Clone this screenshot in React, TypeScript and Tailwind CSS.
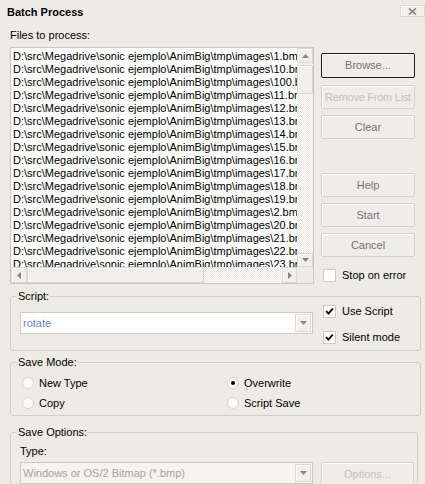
import React from 'react';

const files = ['1', '10', '100', '11', '12', '13', '14', '15', '16', '17', '18', '19', '2', '20', '21', '22', '23', '24'].map(
  (n) => `D:\\src\\Megadrive\\sonic ejemplo\\AnimBig\\tmp\\images\\${n}.bmp`
);

const Tri = ({ dir }: { dir: 'up' | 'down' | 'left' | 'right' }) => {
  const pts = {
    up: '0,4 7,4 3.5,0',
    down: '0,0 7,0 3.5,4',
    left: '4,0 4,7 0,3.5',
    right: '0,0 0,7 4,3.5',
  }[dir];
  const horizontal = dir === 'up' || dir === 'down';
  return (
    <svg width={horizontal ? 7 : 4} height={horizontal ? 4 : 7} viewBox={horizontal ? '0 0 7 4' : '0 0 4 7'}>
      <polygon points={pts} fill="#8e8289" />
    </svg>
  );
};

const ScrollBtn = ({ className, children }: { className?: string; children?: React.ReactNode }) => (
  <div
    className={`flex items-center justify-center bg-[#f1efea] border border-[#dcd8cf] shadow-[inset_1px_1px_0_#ffffff] ${className ?? ''}`}
  >
    {children}
  </div>
);

const Btn = ({
  children,
  disabled,
  isDefault,
  className,
}: {
  children: React.ReactNode;
  disabled?: boolean;
  isDefault?: boolean;
  className?: string;
}) => (
  <div
    className={`flex items-center justify-center whitespace-nowrap rounded-[2px] bg-[#efede9] shadow-[inset_1px_1px_0_#ffffff] ${
      isDefault ? 'h-[25px] border border-[#1d1d1d]' : 'h-[24px] border border-[#d6d1c7]'
    } ${disabled ? 'text-[#c6c0b8]' : 'text-[#7a7072]'} ${className ?? ''}`}
  >
    {children}
  </div>
);

const Check = ({ checked, label, className }: { checked?: boolean; label: string; className?: string }) => (
  <div className={`flex items-center h-[13px] ${className ?? ''}`}>
    <div className="w-[13px] h-[13px] border border-[#d0cabf] bg-white flex items-center justify-center">
      {checked && (
        <svg width="9" height="9" viewBox="0 0 9 9">
          <path d="M1.2 4.2 L3.4 6.6 L7.8 1.6" stroke="#000" strokeWidth="1.9" fill="none" />
        </svg>
      )}
    </div>
    <span className="ml-[6px] leading-[13px]">{label}</span>
  </div>
);

const Radio = ({ checked, label }: { checked?: boolean; label: string }) => (
  <div className="flex items-center h-[12px]">
    <div className="w-[12px] h-[12px] rounded-full border border-[#d8d3ca] bg-[#fbfaf8] flex items-center justify-center">
      {checked && <div className="w-[4px] h-[4px] rounded-full bg-black" />}
    </div>
    <span className="ml-[5px] leading-[13px]">{label}</span>
  </div>
);

const Combo = ({ value, disabled, className }: { value: string; disabled?: boolean; className?: string }) => (
  <div
    className={`h-[22px] border border-[#d0cabf] flex ${disabled ? 'bg-[#f5f3ef]' : 'bg-white'} ${className ?? ''}`}
  >
    <div className={`flex-1 flex items-center pl-[2px] ${disabled ? 'text-[#a9a29a]' : 'text-[#6a86bb]'}`}>{value}</div>
    <ScrollBtn className="w-[16px] my-[1px] mr-[1px]">
      <Tri dir="down" />
    </ScrollBtn>
  </div>
);

const Group = ({ label, className, children }: { label: string; className?: string; children: React.ReactNode }) => (
  <fieldset className={`border border-[#d3cec4] rounded-[3px] ${className ?? ''}`}>
    <legend className="ml-[6px] px-[1px] leading-[13px]">{label}</legend>
    {children}
  </fieldset>
);

const checker =
  'bg-[repeating-conic-gradient(#ffffff_0_25%,#e8e5df_0_50%)] bg-size-[2px_2px]';

export default function App() {
  return (
    <div className="w-[425px] h-[484px] overflow-hidden bg-[#eeebe6] text-[11px] text-black font-['Liberation_Sans',Arial,sans-serif]">
      {/* title bar */}
      <div className="h-[25px] flex justify-between">
        <span className="pl-[7px] leading-[25px] text-[11px] font-bold">Batch Process</span>
        <div className="mt-[5px] w-[25px] h-[12px] bg-[#f1efea] border border-[#dcd8cf] shadow-[inset_1px_1px_0_#ffffff] flex items-center justify-center">
          <svg width="9" height="7" viewBox="0 0 9 7">
            <path d="M1 0.5 L8 6.5 M8 0.5 L1 6.5" stroke="#8a7b84" strokeWidth="1.6" />
          </svg>
        </div>
      </div>

      <div className="pl-[10px] pr-[4px]">
        <div className="mt-[4px] h-[13px] leading-[13px]">Files to process:</div>

        <div className="mt-[5px] flex gap-[7px]">
          {/* file list */}
          <div className="w-[304px] h-[237px] border border-[#cdc7bb] bg-white flex flex-col">
            <div className="flex-1 flex min-h-0">
              <div className="flex-1 overflow-hidden pt-[2px] pl-[2px]">
                {files.map((f) => (
                  <div key={f} className="h-[13px] leading-[13px] whitespace-nowrap">
                    {f}
                  </div>
                ))}
              </div>
              <div className={`w-[16px] flex flex-col ${checker}`}>
                <ScrollBtn className="h-[15px]">
                  <Tri dir="up" />
                </ScrollBtn>
                <ScrollBtn className="mt-[2px] h-[29px]" />
                <div className="flex-1" />
                <ScrollBtn className="h-[14px]">
                  <Tri dir="down" />
                </ScrollBtn>
              </div>
            </div>
            <div className="h-[16px] flex">
              <ScrollBtn className="w-[16px]">
                <Tri dir="left" />
              </ScrollBtn>
              <ScrollBtn className="w-[177px]" />
              <div className={`flex-1 ${checker}`} />
              <ScrollBtn className="w-[15px]">
                <Tri dir="right" />
              </ScrollBtn>
              <div className="w-[16px] bg-[#eeebe6]" />
            </div>
          </div>

          {/* buttons */}
          <div className="w-[94px] flex flex-col pt-[6px]">
            <Btn isDefault>Browse...</Btn>
            <Btn disabled className="mt-[7px] tracking-[-0.25px]">
              Remove From List
            </Btn>
            <Btn className="mt-[6px]">Clear</Btn>
            <Btn className="mt-[34px]">Help</Btn>
            <Btn className="mt-[6px]">Start</Btn>
            <Btn className="mt-[6px]">Cancel</Btn>
            <Check label="Stop on error" className="mt-[12px] ml-[2px]" />
          </div>
        </div>

        <Group label="Script:" className="mt-[6px] w-[411px] h-[61px]">
          <div className="flex pl-[9px]">
            <Combo value="rotate" className="mt-[9px] w-[293px]" />
            <div className="ml-[10px] mt-[2px] flex flex-col gap-[13px]">
              <Check checked label="Use Script" />
              <Check checked label="Silent mode" />
            </div>
          </div>
        </Group>

        <Group label="Save Mode:" className="mt-[5px] w-[411px] h-[60px]">
          <div className="mt-[8px] pl-[11px] grid grid-cols-[205px_1fr] gap-y-[8px]">
            <Radio label="New Type" />
            <Radio checked label="Overwrite" />
            <Radio label="Copy" />
            <Radio label="Script Save" />
          </div>
        </Group>

        <Group label="Save Options:" className="mt-[10px] w-[408px] h-[80px]">
          <div className="pl-[9px]">
            <div className="mt-[6px] h-[13px] leading-[13px]">Type:</div>
            <div className="mt-[4px] flex">
              <Combo value="Windows or OS/2 Bitmap (*.bmp)" disabled className="w-[293px]" />
              <Btn disabled className="ml-[8px] w-[93px] h-[24px]">
                Options...
              </Btn>
            </div>
          </div>
        </Group>
      </div>
    </div>
  );
}
